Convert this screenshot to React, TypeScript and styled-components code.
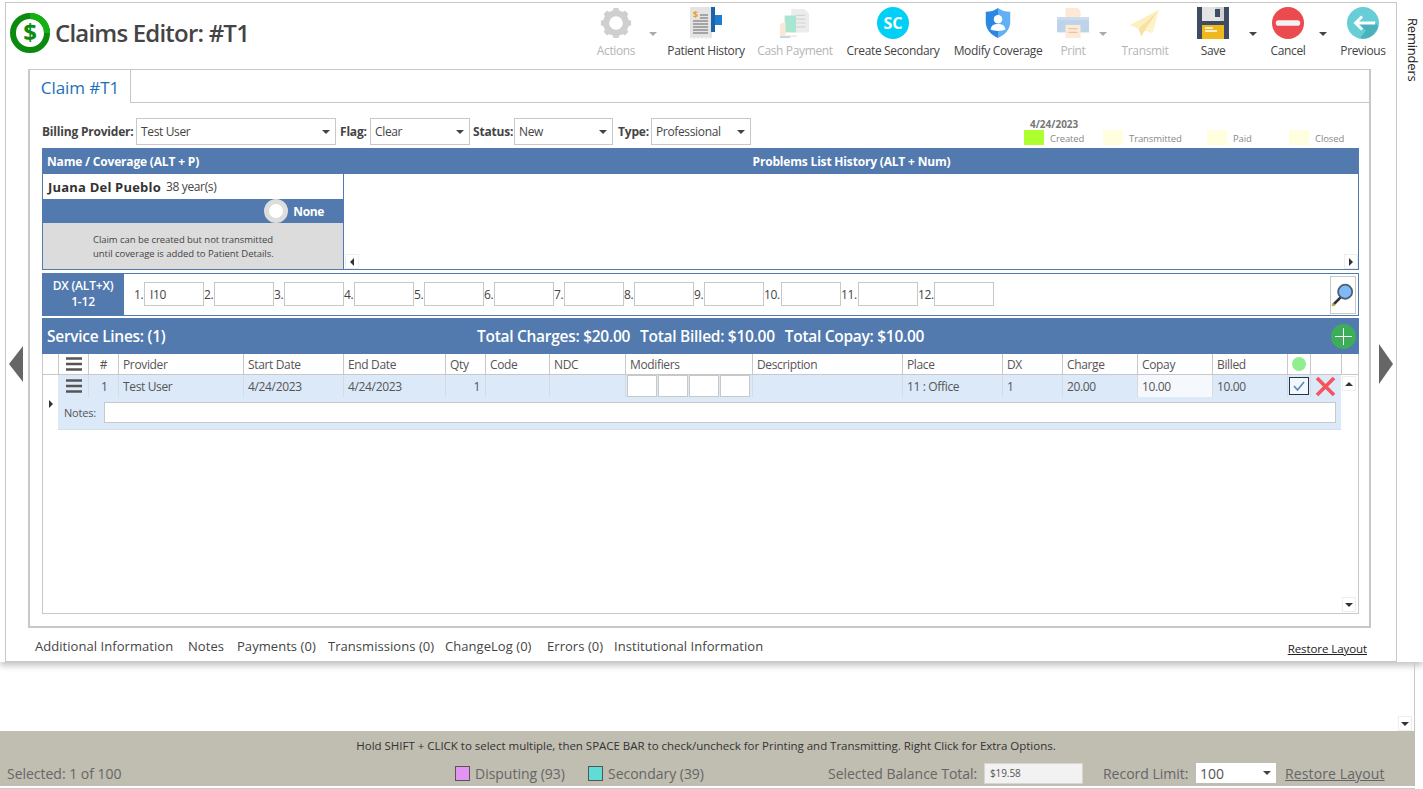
import React from "react";
import styled, { createGlobalStyle } from "styled-components";

const Global = createGlobalStyle`
  html, body { margin: 0; padding: 0; background: #fff; }
  body { font-family: "Open Sans", "Noto Sans", "Liberation Sans", sans-serif; font-size: 12px; color: #444; letter-spacing: -0.35px; }
  * { box-sizing: border-box; }
`;

const BLUE = "#527aae";
const LINE = "#c8c8c8";
const COLS = "16px 30px 30px 125px 100px 102px 40px 64px 76px 127px 150px 100px 60px 75px 75px 75px 23px 31px 16px";
const ROWCOLS = "31px 30px 125px 100px 102px 40px 64px 76px 127px 150px 100px 60px 75px 75px 75px 23px 30px";

const Page = styled.div`width: 1423px; height: 789px; overflow: hidden; display: flex; flex-direction: column;`;
const TopArea = styled.div`display: flex; height: 662px; padding: 2px 0 0 5px; box-shadow: 0 4px 6px rgba(0,0,0,.22); flex: none;`;
const Panel = styled.div`width: 1392px; height: 660px; border: 1px solid ${LINE}; display: flex; flex-direction: column; background: #fff;`;
const Reminders = styled.div`flex: 1; padding: 16px 0 0 3px; writing-mode: vertical-rl; font-size: 13px; color: #222; letter-spacing: -0.2px; line-height: 20px;`;

const Header = styled.div`height: 66px; display: flex; justify-content: space-between; position: relative;`;
const Brand = styled.div`display: flex; align-items: center; gap: 5px; padding: 0 0 6px 4px;`;
const Title = styled.div`font-size: 24px; font-weight: 600; color: #444; letter-spacing: -0.8px; line-height: 32px;`;
const Toolbar = styled.div`display: flex; padding-right: 2px;`;
const ToolItem = styled.div<{ $w: number; $off?: boolean }>`
  width: ${p => p.$w}px; display: flex; flex-direction: column; align-items: center; padding-top: 4px;
  color: ${p => (p.$off ? "#b5b5b5" : "#444")}; white-space: nowrap; font-size: 12px;
`;
const ToolIcon = styled.div`width: 32px; height: 32px; display: flex; align-items: center; justify-content: center;`;
const ToolLabel = styled.div`margin-top: 4px; line-height: 16px;`;
const Caret = styled.div<{ $w: number; $off?: boolean }>`
  width: ${p => p.$w}px; padding-top: 29px; display: flex; justify-content: center;
  &::after { content: ""; border-left: 4px solid transparent; border-right: 4px solid transparent; border-top: 4px solid ${p => (p.$off ? "#aaa" : "#444")}; }
`;
const ScBadge = styled.div`width: 32px; height: 32px; border-radius: 50%; background: #00d0f5; color: #fff; font-weight: 700; font-size: 16px; letter-spacing: 0; display: flex; align-items: center; justify-content: center;`;

const Main = styled.div`display: flex; height: 559px;`;
const Gutter = styled.div<{ $w: number; $left: number; $top: number }>`width: ${p => p.$w}px; padding: ${p => p.$top}px 0 0 ${p => p.$left}px; flex: none;`;
const Arrow = styled.div<{ $dir: "l" | "r"; $h: number }>`
  width: 0; height: 0; border-top: ${p => p.$h}px solid transparent; border-bottom: ${p => p.$h}px solid transparent;
  ${p => (p.$dir === "l" ? "border-right: 14px solid #666;" : "border-left: 14px solid #666;")}
`;
const TabFrame = styled.div`width: 1343px; height: 559px; border: 2px solid ${LINE}; border-top: 1px solid ${LINE}; display: flex; flex-direction: column;`;
const TabStrip = styled.div`height: 33px; display: flex; flex: none;`;
const Tab = styled.div`width: 101px; border-right: 1px solid ${LINE}; color: #1c70b8; font-size: 17px; letter-spacing: -0.05px; display: flex; align-items: center; justify-content: center; padding: 2px 0 0 0;`;
const TabRest = styled.div`flex: 1; border-bottom: 1px solid ${LINE};`;
const TabBody = styled.div`flex: 1; padding: 15px 10px 12px 12px; display: flex; flex-direction: column;`;

const FormRow = styled.div`display: flex; align-items: center; height: 27px; flex: none;`;
const FieldLabel = styled.div<{ $w: number; $pad?: number }>`width: ${p => p.$w}px; padding-left: ${p => p.$pad ?? 0}px; font-weight: 700; color: #444; white-space: nowrap; letter-spacing: -0.2px;`;
const Select = styled.div<{ $w: number; $h?: number }>`
  width: ${p => p.$w}px; height: ${p => p.$h ?? 27}px; background: #fff; border: 1px solid ${LINE}; display: flex; align-items: center; justify-content: space-between; padding: 0 5px 0 4px; color: #444; white-space: nowrap;
  &::after { content: ""; border-left: 4px solid transparent; border-right: 4px solid transparent; border-top: 4px solid #444; }
`;
const Legend = styled.div`margin-left: auto; padding-right: 14px; display: flex; flex-direction: column;`;
const LegendDate = styled.div`font-size: 10px; font-weight: 700; color: #777; padding-left: 6px; line-height: 12px; letter-spacing: 0;`;
const LegendRow = styled.div`display: flex;`;
const LegendItem = styled.div<{ $w: number }>`width: ${p => p.$w}px; display: flex; align-items: center; gap: 6px; font-size: 9.5px; color: #888; letter-spacing: -0.1px; line-height: 17px; height: 15px; & > span { padding-top: 2px; }`;
const Swatch = styled.div<{ $c: string }>`width: 20px; height: 15px; background: ${p => p.$c};`;

const ClaimBlock = styled.div`margin-top: 3px; flex: none; display: flex; flex-direction: column; height: 122px;`;
const BlueBar = styled.div`height: 26px; background: ${BLUE}; color: #fff; font-weight: 700; display: flex; align-items: center; flex: none; letter-spacing: -0.18px;`;
const NameHead = styled.div`width: 302px; padding-left: 5px;`;
const ProblemHead = styled.div`flex: 1; text-align: center;`;
const ClaimBody = styled.div`flex: 1; display: flex; border: 1px solid ${BLUE}; border-top: 0;`;
const Coverage = styled.div`width: 301px; border-right: 1px solid ${BLUE}; display: flex; flex-direction: column;`;
const NameRow = styled.div`height: 25px; display: flex; align-items: center; gap: 5px; padding-left: 5px; font-size: 12px;`;
const PatientName = styled.span`font-size: 13px; font-weight: 700; color: #333; letter-spacing: 0.2px;`;
const StatusRow = styled.div`height: 24px; background: ${BLUE}; display: flex; align-items: center; justify-content: flex-end; padding-right: 19px; gap: 5px; color: #fff; font-weight: 700; font-size: 12px;`;
const StatusDot = styled.div`width: 24px; height: 24px; border-radius: 50%; background: #fff; border: 5px solid #ddd;`;
const Notice = styled.div`flex: 1; background: #dcdcdc; font-size: 9.5px; line-height: 14px; color: #444; padding: 10px 0 0 50px; letter-spacing: -0.05px;`;
const ProblemArea = styled.div`flex: 1; display: flex; align-items: flex-end;`;
const ScrollBtn = styled.div<{ $dir: "l" | "r" | "u" | "d" }>`
  width: 14px; height: 15px; border: 1px solid #eee; display: flex; align-items: center; justify-content: center; flex: none; background: #fff;
  &::after {
    content: ""; width: 0; height: 0;
    ${p => p.$dir === "l" && "border-top: 4px solid transparent; border-bottom: 4px solid transparent; border-right: 4px solid #333;"}
    ${p => p.$dir === "r" && "border-top: 4px solid transparent; border-bottom: 4px solid transparent; border-left: 4px solid #333;"}
    ${p => p.$dir === "u" && "border-left: 4px solid transparent; border-right: 4px solid transparent; border-bottom: 4px solid #333;"}
    ${p => p.$dir === "d" && "border-left: 4px solid transparent; border-right: 4px solid transparent; border-top: 4px solid #333;"}
  }
`;
const ProblemTrack = styled.div`flex: 1; display: flex; justify-content: space-between; padding: 0 0 0 1px;`;

const DxRow = styled.div`margin-top: 3px; height: 43px; flex: none; border: 1px solid ${BLUE}; border-left: 0; display: flex; align-items: center;`;
const DxHead = styled.div`width: 82px; height: 41px; background: ${BLUE}; color: #fff; font-weight: 600; text-align: center; line-height: 16px; padding-top: 4px; flex: none; letter-spacing: -0.2px;`;
const DxFields = styled.div`display: flex; padding: 0 0 1px 10px; flex: 1; align-items: center;`;
const DxField = styled.div<{ $w: number }>`width: ${p => p.$w}px; display: flex; align-items: center; justify-content: space-between; color: #444;`;
const DxInput = styled.div`width: 60px; height: 24px; border: 1px solid ${LINE}; padding: 0 5px; display: flex; align-items: center; background: #fff;`;
const SearchBtn = styled.div`width: 26px; height: 38px; border: 1px solid ${LINE}; margin-right: 2px; display: flex; align-items: center; justify-content: center;`;

const ServiceBar = styled.div`margin-top: 2px; height: 36px; flex: none; background: ${BLUE}; color: #fff; font-size: 15.5px; font-weight: 600; display: flex; align-items: center; padding: 0 3px 0 5px; letter-spacing: -0.28px; white-space: nowrap;`;
const ServiceTitle = styled.div`width: 430px;`;
const Totals = styled.div`display: flex; gap: 10px;`;
const AddBtn = styled.div`margin-left: auto; width: 25px; height: 25px; border-radius: 50%; background: #3cae5a; display: flex; align-items: center; justify-content: center;`;

const GridBox = styled.div`height: 260px; flex: none; border: 1px solid ${LINE}; border-top: 0; display: flex; flex-direction: column;`;
const HeadRow = styled.div`height: 21px; display: grid; grid-template-columns: ${COLS}; border-bottom: 1px solid ${LINE}; flex: none;`;
const HeadCell = styled.div<{ $c?: boolean }>`border-right: 1px solid ${LINE}; padding-left: 4px; display: flex; align-items: center; color: #555; white-space: nowrap; overflow: hidden; ${p => p.$c && "justify-content: center; padding-left: 0;"} &:last-child { border-right: 0; }`;
const GridBody = styled.div`flex: 1; display: flex;`;
const RowMark = styled.div`width: 15px; height: 54px; display: flex; align-items: center; padding: 3px 0 0 6px; flex: none; &::after { content: ""; border-top: 4px solid transparent; border-bottom: 4px solid transparent; border-left: 4px solid #333; }`;
const RowBlock = styled.div`width: 1283px; height: 55px; background: #dce9f8; flex: none; border-bottom: 1px solid #d5dde6;`;
const CellRow = styled.div`display: grid; grid-template-columns: ${ROWCOLS}; height: 22px;`;
const Cell = styled.div<{ $num?: boolean; $light?: boolean; $pad?: number }>`
  border-right: 1px solid #d4dbe3; display: flex; align-items: center; padding: 0 ${p => (p.$num ? 5 : 0)}px 0 ${p => p.$pad ?? 4}px; color: #555; white-space: nowrap;
  ${p => p.$num && "justify-content: flex-end;"}
  ${p => p.$light && "background: #f5f9fd;"}
  &:last-child { border-right: 0; }
`;
const ModInputs = styled.div`display: flex; gap: 1px;`;
const ModInput = styled.div`width: 30px; height: 22px; background: #fff; border: 1px solid ${LINE};`;
const CheckBox = styled.div`width: 20px; height: 18px; border: 1px solid #26364a; background: #f2f7fc; display: flex; align-items: center; justify-content: center;`;
const NotesRow = styled.div`display: flex; align-items: center; height: 21px; margin-top: 5px; padding-left: 6px;`;
const NotesLabel = styled.div`width: 40px; font-size: 11px; color: #555; letter-spacing: -0.2px;`;
const NotesInput = styled.div`width: 1232px; height: 21px; background: #fff; border: 1px solid ${LINE};`;
const VScroll = styled.div`flex: 1; display: flex; flex-direction: column; justify-content: space-between; align-items: center; padding: 1px 1px 1px 0;`;
const Dot = styled.div`width: 14px; height: 14px; border-radius: 50%; background: #90ee90;`;

const Footer = styled.div`flex: 1; display: flex; align-items: center; padding: 3px 29px 0 29px; font-size: 13px; color: #444; white-space: nowrap; letter-spacing: 0.05px;`;
const FooterTab = styled.div<{ $w: number }>`width: ${p => p.$w}px;`;
const RestoreSmall = styled.div`margin-left: auto; font-size: 11.5px; text-decoration: underline; color: #222; padding-top: 5px; letter-spacing: -0.08px;`;

const Lower = styled.div`height: 69px; width: 1415px; border-right: 1px solid ${LINE}; display: flex; align-items: flex-end; justify-content: flex-end; flex: none; padding: 0 2px 0 0;`;
const StatusBar = styled.div`width: 1415px; height: 55px; background: #c0bdb1; flex: none; display: flex; flex-direction: column;`;
const Hint = styled.div`height: 31px; text-align: center; padding: 7px 3px 0 0; font-size: 11.5px; color: #333; letter-spacing: -0.02px; line-height: 16px;`;
const StatusRowBottom = styled.div`flex: 1; display: flex; align-items: center; font-size: 14px; color: #666; white-space: nowrap; padding-bottom: 2px; letter-spacing: -0.02px;`;
const Stat = styled.div<{ $w: number; $pad?: number }>`width: ${p => p.$w}px; padding-left: ${p => p.$pad ?? 0}px; flex: none;`;
const ColorBox = styled.div<{ $c: string }>`width: 15px; height: 15px; background: ${p => p.$c}; border: 1px solid #555; flex: none;`;
const BalanceInput = styled.div`width: 99px; height: 21px; background: #f2f2f2; border: 1px solid #d8d6cd; font-size: 10px; color: #555; padding-left: 5px; display: flex; align-items: center; flex: none; letter-spacing: -0.1px;`;
const LimitSelect = styled(Select)`color: #555; font-size: 14px; border: 0; height: 20px; flex: none;`;
const RestoreBig = styled.div`margin-left: 9px; text-decoration: underline; color: #666; letter-spacing: 0.12px;`;
const BottomLine = styled.div`width: 1415px; height: 3px; border-bottom: 1px solid ${LINE}; flex: none;`;

const Logo = () => (
  <svg width="40" height="40" viewBox="0 0 40 40">
    <circle cx="20" cy="20" r="17" fill="none" stroke="#0a8a0e" strokeWidth="6" />
    <path d="M20 3A17 17 0 0 1 37 20" fill="none" stroke="#12b012" strokeWidth="6" />
    <text x="20" y="28" textAnchor="middle" fontSize="24" fontWeight="700" fill="#0c8c10" fontFamily="Open Sans, sans-serif">$</text>
  </svg>
);
const Gear = () => (
  <svg width="32" height="32" viewBox="0 0 34 34">
    <circle cx="17" cy="17" r="10.5" fill="none" stroke="#cfcfcf" strokeWidth="6.5" />
    {[0, 45, 90, 135, 180, 225, 270, 315].map(a => (
      <rect key={a} x="14" y="1" width="6" height="6" rx="1" fill="#cfcfcf" transform={`rotate(${a} 17 17)`} />
    ))}
  </svg>
);
const History = () => (
  <svg width="32" height="32" viewBox="0 0 32 32">
    <path d="M0 0H22V30L20 32L18 30L16 32L14 30L12 32L10 30L8 32L6 30L4 32L2 30L0 32Z" fill="#e4e4e4" />
    <text x="3" y="11" fontSize="9" fontWeight="700" fill="#f09a1a" fontFamily="Open Sans, sans-serif">$</text>
    <path d="M10 8H18M10 11H18M3 14H18M3 17H18M3 20H18M3 23H18M3 26H18" stroke="#666" strokeWidth="1.1" />
    <path d="M21 0H25V25H21Z" fill="#1b63a8" />
    <path d="M25 8H32V18H25Z" fill="#1e7cd0" />
  </svg>
);
const Cash = () => (
  <svg width="32" height="32" viewBox="0 0 34 34">
    <path d="M13 2H27L32 7V27H13Z" fill="#ececec" />
    <path d="M18 9H28M18 13H28M18 17H28M18 21H28" stroke="#d4d4d4" strokeWidth="1.3" />
    <path d="M6 9H18V27H6Z" fill="#a8e6d2" />
    <path d="M1 18L7 16V30H19V32H1Z" fill="#fbe8d6" />
    <path d="M1 31H12V33H1Z" fill="#bcd8f0" />
  </svg>
);
const Shield = () => (
  <svg width="32" height="32" viewBox="0 0 34 34">
    <path d="M17 1C21 4 25 5 30 5V16C30 24 24 30 17 33Z" fill="#62b0f4" />
    <path d="M17 1C13 4 9 5 4 5V16C4 24 10 30 17 33Z" fill="#2a87e4" />
    <circle cx="17" cy="13" r="4.5" fill="#fff" />
    <path d="M9 24C10 19 13 18 17 18C21 18 24 19 25 24C22 26 12 26 9 24Z" fill="#fff" />
  </svg>
);
const Printer = () => (
  <svg width="32" height="32" viewBox="0 0 34 34">
    <path d="M9 1H22L25 4V12H9Z" fill="#fde9d5" />
    <path d="M0 11H34V27H0Z" fill="#bcd3ea" />
    <path d="M0 11H34V14H0Z" fill="#cbdcef" />
    <path d="M9 19H25V33H9Z" fill="#fde9d5" />
    <path d="M12 23H22M12 27H22" stroke="#e0c8b0" strokeWidth="1.2" />
  </svg>
);
const Plane = () => (
  <svg width="32" height="32" viewBox="0 0 34 34">
    <path d="M32 3L1 19L10 23Z" fill="#fdf0c0" />
    <path d="M32 3L10 23L13 31L17 25Z" fill="#f8e2a2" />
    <path d="M32 3L17 25L25 28Z" fill="#fdf3c8" />
  </svg>
);
const Floppy = () => (
  <svg width="32" height="32" viewBox="0 0 32 32">
    <path d="M0 0H32V32H0Z" fill="#3f4a63" />
    <path d="M5 0H27V14H5Z" fill="#e4e4e4" />
    <path d="M18 0H27V14H24Z" fill="#cfd3d3" />
    <path d="M18 2H23V10H18Z" fill="#3f4a63" />
    <path d="M5 18H27V32H5Z" fill="#efb81d" />
    <path d="M8 21H16M8 24H20" stroke="#fff" strokeWidth="1.3" />
  </svg>
);
const Cancel = () => (
  <svg width="32" height="32" viewBox="0 0 34 34">
    <circle cx="17" cy="17" r="17" fill="#eb4a4e" />
    <rect x="4" y="14" width="26" height="6" rx="3" fill="#f2f2f2" />
  </svg>
);
const Previous = () => (
  <svg width="32" height="32" viewBox="0 0 34 34">
    <circle cx="17" cy="17" r="17" fill="#67ced7" />
    <path d="M12 17L20 25L14 33C22 35 30 30 33 21L31 17Z" fill="#4bb2bc" />
    <path d="M9 17H30M16 10L9 17L16 24" fill="none" stroke="#fff" strokeWidth="3" />
  </svg>
);
const Search = () => (
  <svg width="24" height="26" viewBox="0 0 22 24">
    <path d="M2 21L9 14" stroke="#333" strokeWidth="2.4" />
    <path d="M1 22L3 20" stroke="#a8b030" strokeWidth="2" />
    <circle cx="13" cy="9" r="6.5" fill="#7fbaf7" stroke="#4a6072" strokeWidth="1.6" />
  </svg>
);
const Hamburger = ({ c }: { c: string }) => (
  <svg width="16" height="14" viewBox="0 0 16 14">
    <path d="M0 1.5H16M0 7H16M0 12.5H16" stroke={c} strokeWidth="2.4" />
  </svg>
);
const Plus = () => (
  <svg width="17" height="17" viewBox="0 0 17 17"><path d="M8.5 0V17M0 8.5H17" stroke="#fff" strokeWidth="1" /></svg>
);
const Check = () => (
  <svg width="12" height="10" viewBox="0 0 12 10"><path d="M1 5L4.5 9L11 1" fill="none" stroke="#5a85c4" strokeWidth="1.6" /></svg>
);
const RedX = () => (
  <svg width="21" height="21" viewBox="0 0 21 21"><path d="M2 2L19 19M19 2L2 19" stroke="#f4545a" strokeWidth="3.6" /></svg>
);

const tools: { w: number; label: string; off?: boolean; icon: React.ReactNode; caret?: number }[] = [
  { w: 60, label: "Actions", off: true, icon: <Gear />, caret: 14 },
  { w: 92, label: "Patient History", icon: <History /> },
  { w: 86, label: "Cash Payment", off: true, icon: <Cash /> },
  { w: 110, label: "Create Secondary", icon: <ScBadge>SC</ScBadge> },
  { w: 100, label: "Modify Coverage", icon: <Shield /> },
  { w: 50, label: "Print", off: true, icon: <Printer />, caret: 10 },
  { w: 74, label: "Transmit", off: true, icon: <Plane /> },
  { w: 62, label: "Save", icon: <Floppy />, caret: 18 },
  { w: 52, label: "Cancel", icon: <Cancel />, caret: 18 },
  { w: 62, label: "Previous", icon: <Previous /> },
];

const dx: { n: string; w: number; v?: string }[] = [
  { n: "1.", w: 70, v: "I10" }, { n: "2.", w: 70 }, { n: "3.", w: 70 }, { n: "4.", w: 70 }, { n: "5.", w: 70 },
  { n: "6.", w: 70 }, { n: "7.", w: 70 }, { n: "8.", w: 70 }, { n: "9.", w: 70 }, { n: "10.", w: 77 }, { n: "11.", w: 77 }, { n: "12.", w: 76 },
];

const heads = ["Provider", "Start Date", "End Date", "Qty", "Code", "NDC", "Modifiers", "Description", "Place", "DX", "Charge", "Copay", "Billed"];
const footerTabs: [string, number][] = [
  ["Additional Information", 153], ["Notes", 49], ["Payments (0)", 91], ["Transmissions (0)", 117],
  ["ChangeLog (0)", 102], ["Errors (0)", 67], ["Institutional Information", 150],
];

export default function App() {
  return (
    <Page>
      <Global />
      <TopArea>
        <Panel>
          <Header>
            <Brand>
              <Logo />
              <Title>Claims Editor: #T1</Title>
            </Brand>
            <Toolbar>
              {tools.map(t => (
                <React.Fragment key={t.label}>
                  <ToolItem $w={t.w} $off={t.off}>
                    <ToolIcon>{t.icon}</ToolIcon>
                    <ToolLabel>{t.label}</ToolLabel>
                  </ToolItem>
                  {t.caret && <Caret $w={t.caret} $off={t.off} />}
                </React.Fragment>
              ))}
            </Toolbar>
          </Header>
          <Main>
            <Gutter $w={22} $left={3} $top={277}><Arrow $dir="l" $h={18} /></Gutter>
            <TabFrame>
              <TabStrip>
                <Tab>Claim #T1</Tab>
                <TabRest />
              </TabStrip>
              <TabBody>
                <FormRow>
                  <FieldLabel $w={94}>Billing Provider:</FieldLabel>
                  <Select $w={200}>Test User</Select>
                  <FieldLabel $w={34} $pad={4}>Flag:</FieldLabel>
                  <Select $w={100}>Clear</Select>
                  <FieldLabel $w={44} $pad={3}>Status:</FieldLabel>
                  <Select $w={99}>New</Select>
                  <FieldLabel $w={38} $pad={5}>Type:</FieldLabel>
                  <Select $w={100}>Professional</Select>
                  <Legend>
                    <LegendDate>4/24/2023</LegendDate>
                    <LegendRow>
                      <LegendItem $w={79}><Swatch $c="#adff2f" /><span>Created</span></LegendItem>
                      <LegendItem $w={104}><Swatch $c="#ffffe0" /><span>Transmitted</span></LegendItem>
                      <LegendItem $w={82}><Swatch $c="#ffffe0" /><span>Paid</span></LegendItem>
                      <LegendItem $w={56}><Swatch $c="#ffffe0" /><span>Closed</span></LegendItem>
                    </LegendRow>
                  </Legend>
                </FormRow>
                <ClaimBlock>
                  <BlueBar>
                    <NameHead>Name / Coverage (ALT + P)</NameHead>
                    <ProblemHead>Problems List History (ALT + Num)</ProblemHead>
                  </BlueBar>
                  <ClaimBody>
                    <Coverage>
                      <NameRow><PatientName>Juana Del Pueblo</PatientName> 38 year(s)</NameRow>
                      <StatusRow><StatusDot />None</StatusRow>
                      <Notice>Claim can be created but not transmitted<br />until coverage is added to Patient Details.</Notice>
                    </Coverage>
                    <ProblemArea>
                      <ProblemTrack>
                        <ScrollBtn $dir="l" />
                        <ScrollBtn $dir="r" />
                      </ProblemTrack>
                    </ProblemArea>
                  </ClaimBody>
                </ClaimBlock>
                <DxRow>
                  <DxHead>DX (ALT+X)<br />1-12</DxHead>
                  <DxFields>
                    {dx.map(d => (
                      <DxField key={d.n} $w={d.w}>{d.n}<DxInput>{d.v}</DxInput></DxField>
                    ))}
                  </DxFields>
                  <SearchBtn><Search /></SearchBtn>
                </DxRow>
                <ServiceBar>
                  <ServiceTitle>Service Lines: (1)</ServiceTitle>
                  <Totals>
                    <span>Total Charges: $20.00</span>
                    <span>Total Billed: $10.00</span>
                    <span>Total Copay: $10.00</span>
                  </Totals>
                  <AddBtn><Plus /></AddBtn>
                </ServiceBar>
                <GridBox>
                  <HeadRow>
                    <HeadCell />
                    <HeadCell $c><Hamburger c="#555" /></HeadCell>
                    <HeadCell $c>#</HeadCell>
                    {heads.map(h => <HeadCell key={h}>{h}</HeadCell>)}
                    <HeadCell $c><Dot /></HeadCell>
                    <HeadCell />
                    <HeadCell />
                  </HeadRow>
                  <GridBody>
                    <RowMark />
                    <RowBlock>
                      <CellRow>
                        <Cell $pad={8}><Hamburger c="#555" /></Cell>
                        <Cell $pad={12}>1</Cell>
                        <Cell>Test User</Cell>
                        <Cell>4/24/2023</Cell>
                        <Cell>4/24/2023</Cell>
                        <Cell $num>1</Cell>
                        <Cell />
                        <Cell />
                        <Cell $pad={1}>
                          <ModInputs><ModInput /><ModInput /><ModInput /><ModInput /></ModInputs>
                        </Cell>
                        <Cell />
                        <Cell>11 : Office</Cell>
                        <Cell>1</Cell>
                        <Cell>20.00</Cell>
                        <Cell $light>10.00</Cell>
                        <Cell>10.00</Cell>
                        <Cell $pad={1}><CheckBox><Check /></CheckBox></Cell>
                        <Cell $pad={4}><RedX /></Cell>
                      </CellRow>
                      <NotesRow>
                        <NotesLabel>Notes:</NotesLabel>
                        <NotesInput />
                      </NotesRow>
                    </RowBlock>
                    <VScroll>
                      <ScrollBtn $dir="u" />
                      <ScrollBtn $dir="d" />
                    </VScroll>
                  </GridBody>
                </GridBox>
              </TabBody>
            </TabFrame>
            <Gutter $w={24} $left={8} $top={275}><Arrow $dir="r" $h={20} /></Gutter>
          </Main>
          <Footer>
            {footerTabs.map(([t, w]) => <FooterTab key={t} $w={w}>{t}</FooterTab>)}
            <RestoreSmall>Restore Layout</RestoreSmall>
          </Footer>
        </Panel>
        <Reminders>Reminders</Reminders>
      </TopArea>
      <Lower><ScrollBtn $dir="d" /></Lower>
      <StatusBar>
        <Hint>Hold SHIFT + CLICK to select multiple, then SPACE BAR to check/uncheck for Printing and Transmitting. Right Click for Extra Options.</Hint>
        <StatusRowBottom>
          <Stat $w={455} $pad={7}>Selected: 1 of 100</Stat>
          <ColorBox $c="#e394f2" />
          <Stat $w={118} $pad={5}>Disputing (93)</Stat>
          <ColorBox $c="#5fdcd6" />
          <Stat $w={225} $pad={5}>Secondary (39)</Stat>
          <Stat $w={156}>Selected Balance Total:</Stat>
          <BalanceInput>$19.58</BalanceInput>
          <Stat $w={113} $pad={20}>Record Limit:</Stat>
          <LimitSelect $w={80}>100</LimitSelect>
          <RestoreBig>Restore Layout</RestoreBig>
        </StatusRowBottom>
      </StatusBar>
      <BottomLine />
    </Page>
  );
}
